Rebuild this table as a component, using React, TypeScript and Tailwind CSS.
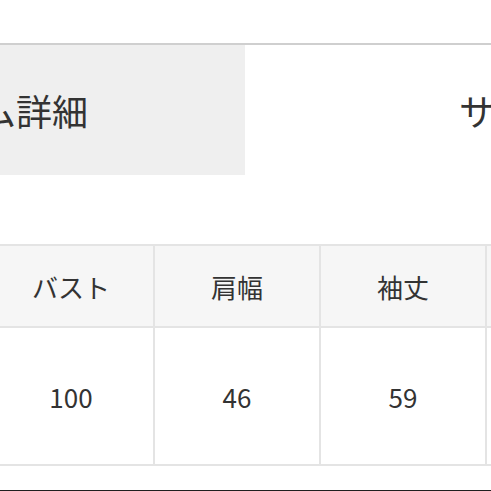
const cols = [
  { head: 'バスト', value: '100' },
  { head: '肩幅', value: '46' },
  { head: '袖丈', value: '59' },
  { head: '着丈', value: '70' },
];

export default function App() {
  return (
    <div
      className="w-[491px] h-[491px] overflow-hidden bg-white text-[#333333]"
      style={{ fontFamily: '"Noto Sans CJK JP", "Noto Sans", sans-serif' }}
    >
      <div className="h-[43px]" />

      {/* Tabs */}
      <div className="flex h-[132px] border-t-2 border-[#cfcfcf]">
        <div className="w-[245px] shrink-0 bg-[#efefef] flex items-center justify-end pr-[157px] overflow-hidden whitespace-nowrap text-[36px] leading-none">
          アイテム詳細
        </div>
        <div className="flex-1 flex items-center pl-[214px] overflow-hidden whitespace-nowrap text-[36px] leading-none">
          サイズ
        </div>
      </div>

      <div className="h-[69px]" />

      {/* Size table */}
      <div className="ml-[-11px] flex flex-col border-t-2 border-[#e4e4e4]">
        <div className="flex">
          {cols.map((c) => (
            <div
              key={c.head}
              className="w-[166px] shrink-0 h-[82px] bg-[#f6f6f6] border-r-2 border-b-2 border-[#e4e4e4] flex items-center justify-center text-[26px]"
            >
              {c.head}
            </div>
          ))}
        </div>
        <div className="flex">
          {cols.map((c) => (
            <div
              key={c.head}
              className="w-[166px] shrink-0 h-[138px] bg-white border-r-2 border-b-2 border-[#e4e4e4] flex items-center justify-center text-[26px]"
            >
              {c.value}
            </div>
          ))}
        </div>
      </div>

      <div className="h-[24px]" />
      <div className="border-t-2 border-[#1f1f1f]" />
    </div>
  );
}
